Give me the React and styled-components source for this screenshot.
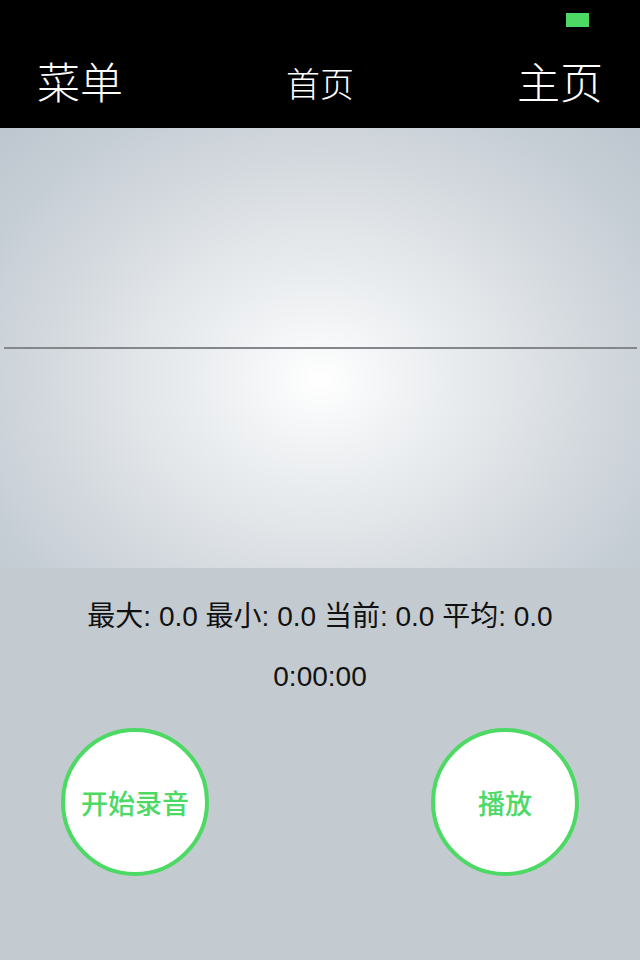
import React from "react";
import styled, { createGlobalStyle } from "styled-components";

const GlobalStyle = createGlobalStyle`
  html, body {
    margin: 0;
    padding: 0;
    background: #c3cad0;
  }
  body {
    font-family: "Liberation Sans", "Noto Sans CJK SC", sans-serif;
  }
`;

const Screen = styled.div`
  width: 640px;
  height: 960px;
  display: flex;
  flex-direction: column;
  overflow: hidden;
`;

const StatusBar = styled.div`
  height: 40px;
  background: #000;
  display: flex;
  justify-content: flex-end;
  align-items: flex-start;
  padding: 13px 51px 0 0;
  box-sizing: border-box;
`;

const Battery = styled.div`
  width: 23px;
  height: 14px;
  background: #4cd964;
`;

const NavBar = styled.div`
  height: 88px;
  background: #000;
  display: flex;
  align-items: center;
  justify-content: space-between;
  padding: 0 37px 8px 37px;
  box-sizing: border-box;
  color: #fff;
  font-family: "Noto Sans CJK SC", sans-serif;
`;

const NavItem = styled.div`
  font-size: ${(p) => (p.$title ? 34 : 43)}px;
  line-height: 1;
  font-weight: 300;
  padding-top: ${(p) => (p.$title ? 6 : 0)}px;
`;

const Graph = styled.div`
  height: 440px;
  background: radial-gradient(
    ellipse 480px 390px at 320px 252px,
    #ffffff 0%,
    #f0f2f4 18%,
    #e2e6e9 38%,
    #d3d8de 58%,
    #c6ced5 76%,
    #b9c3cc 100%
  );
  display: flex;
  align-items: center;
  padding: 0 3px 0 4px;
  box-sizing: border-box;
`;

const Baseline = styled.div`
  flex: 1;
  height: 2px;
  background: #83868a;
`;

const Controls = styled.div`
  flex: 1;
  background: #c3cad0;
  display: flex;
  flex-direction: column;
  align-items: center;
  padding-top: 29px;
`;

const Readout = styled.div`
  font-size: 28px;
  line-height: 40px;
  color: #111;
  margin-bottom: ${(p) => p.$gap || 0}px;
`;

const ButtonRow = styled.div`
  align-self: stretch;
  display: flex;
  justify-content: space-between;
  padding: 0 61px;
  margin-top: 31px;
`;

const RoundButton = styled.button`
  width: 148px;
  height: 148px;
  border-radius: 50%;
  border: 4px solid #4cd964;
  background: #fff;
  color: #4cd964;
  font-family: "Noto Sans CJK SC", sans-serif;
  font-size: 27px;
  font-weight: 500;
  padding: 0;
  box-sizing: border-box;
  display: flex;
  align-items: center;
  justify-content: center;
`;

export default function App() {
  return (
    <Screen>
      <GlobalStyle />
      <StatusBar>
        <Battery />
      </StatusBar>
      <NavBar>
        <NavItem>菜单</NavItem>
        <NavItem $title>首页</NavItem>
        <NavItem>主页</NavItem>
      </NavBar>
      <Graph>
        <Baseline />
      </Graph>
      <Controls>
        <Readout $gap={20}>最大: 0.0 最小: 0.0 当前: 0.0 平均: 0.0</Readout>
        <Readout>0:00:00</Readout>
        <ButtonRow>
          <RoundButton>开始录音</RoundButton>
          <RoundButton>播放</RoundButton>
        </ButtonRow>
      </Controls>
    </Screen>
  );
}
